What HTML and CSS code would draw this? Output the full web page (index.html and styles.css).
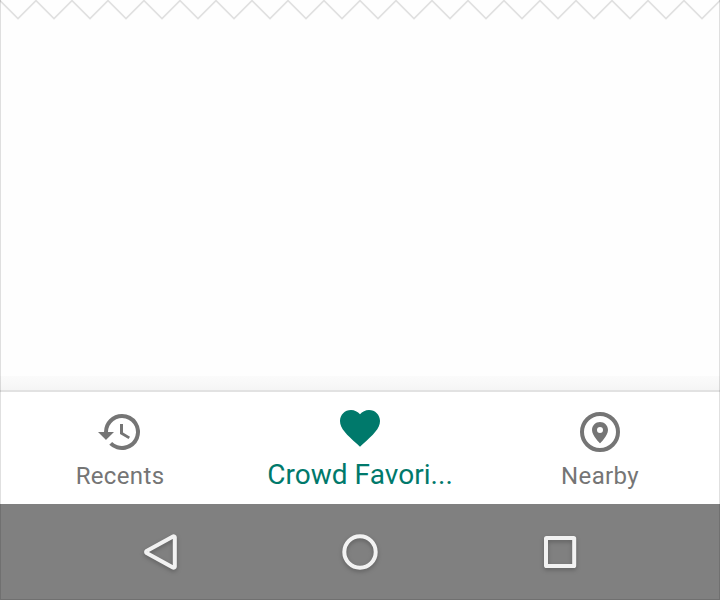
FILE: index.html
```html
<!DOCTYPE html>
<html lang="en">
<head>
<meta charset="utf-8">
<title>Bottom navigation</title>
<link rel="stylesheet" href="styles.css">
</head>
<body>
<div class="screen">
  <main class="content">
    <svg class="tear" width="720" height="20" viewBox="0 0 720 20">
      <defs>
        <pattern id="zigzag" width="36" height="20" patternUnits="userSpaceOnUse">
          <path d="M-2-1.5 18 18.5 38-1.5" fill="none" stroke="#e0e0e0" stroke-width="1.6"/>
        </pattern>
      </defs>
      <rect width="720" height="20" fill="url(#zigzag)"/>
    </svg>
  </main>
  <nav class="tabs">
    <a class="tab">
      <svg class="icon" viewBox="0 0 24 24"><path d="M13 3a9 9 0 0 0-9 9H1l3.89 3.89.07.14L9 12H6a7 7 0 1 1 2.06 4.94l-1.42 1.42A9 9 0 1 0 13 3zm-1 5v5l4.28 2.54.72-1.21-3.5-2.08V8z"/></svg>
      <span class="label">Recents</span>
    </a>
    <a class="tab active">
      <svg class="icon" viewBox="0 0 24 24"><path d="M12 21.35l-1.45-1.32C5.4 15.36 2 12.28 2 8.5 2 5.42 4.42 3 7.5 3c1.74 0 3.41.81 4.5 2.09C13.09 3.81 14.76 3 16.5 3 19.58 3 22 5.42 22 8.5c0 3.78-3.4 6.86-8.55 11.54z"/></svg>
      <span class="label">Crowd Favori...</span>
    </a>
    <a class="tab">
      <svg class="icon" viewBox="0 0 24 24"><circle class="ring" cx="12" cy="12" r="9"/><path fill-rule="evenodd" d="M12 7c-2.2 0-4 1.75-4 3.95C8 13.9 12 17.6 12 17.6s4-3.7 4-6.65C16 8.75 14.2 7 12 7zm0 2.5a1.5 1.5 0 1 1 0 3 1.5 1.5 0 0 1 0-3z"/></svg>
      <span class="label">Nearby</span>
    </a>
  </nav>
  <footer class="system">
    <svg class="key" viewBox="0 0 48 48"><path d="M37 8.4a1.2 1.2 0 0 1 1.8 1v29.2a1.2 1.2 0 0 1-1.8 1L10.6 25a1.2 1.2 0 0 1 0-2z"/></svg>
    <svg class="key" viewBox="0 0 48 48"><circle cx="24" cy="24" r="15.7"/></svg>
    <svg class="key" viewBox="0 0 48 48"><rect x="10" y="10" width="28.2" height="28" rx=".6"/></svg>
  </footer>
</div>
</body>
</html>
```
FILE: styles.css
```css
body {
  margin: 0;
  font-family: Roboto, sans-serif;
}

.screen {
  position: relative;
  display: flex;
  flex-direction: column;
  width: 720px;
  height: 600px;
  overflow: hidden;
  background: #fefefe;
}

.screen::after {
  content: "";
  position: absolute;
  inset: 0;
  border: solid rgba(0, 0, 0, .12);
  border-width: 0 1px 1px;
}

.content {
  display: flex;
  flex-direction: column;
  justify-content: space-between;
  height: 392px;
}

.content::after {
  content: "";
  box-sizing: border-box;
  height: 16px;
  border-bottom: 2px solid #e2e2e2;
  background: linear-gradient(#fbfbfb, #f5f5f5);
}

.tear {
  display: block;
}

.tabs {
  display: grid;
  grid-template-columns: repeat(3, 240px);
  height: 112px;
  background: #fff;
}

.tab {
  display: flex;
  flex-direction: column;
  align-items: center;
  padding-top: 16px;
  color: #757575;
  fill: currentColor;
}

.icon {
  width: 48px;
  height: 48px;
}

.ring {
  fill: none;
  stroke: currentColor;
  stroke-width: 2;
}

.label {
  margin-top: 6px;
  font-size: 24px;
  line-height: 28px;
  letter-spacing: .35px;
  white-space: nowrap;
}

.active {
  padding-top: 12px;
  color: #00796b;
}

.active .label {
  font-size: 28px;
  line-height: 34px;
  letter-spacing: .05px;
}

.system {
  display: flex;
  justify-content: center;
  align-items: center;
  gap: 152px;
  height: 96px;
  background: #808080;
}

.key {
  width: 48px;
  height: 48px;
  fill: none;
  stroke: #f2f2f2;
  stroke-width: 4;
  stroke-linejoin: round;
  filter: drop-shadow(0 2px 2px rgba(0, 0, 0, .25));
}
```
